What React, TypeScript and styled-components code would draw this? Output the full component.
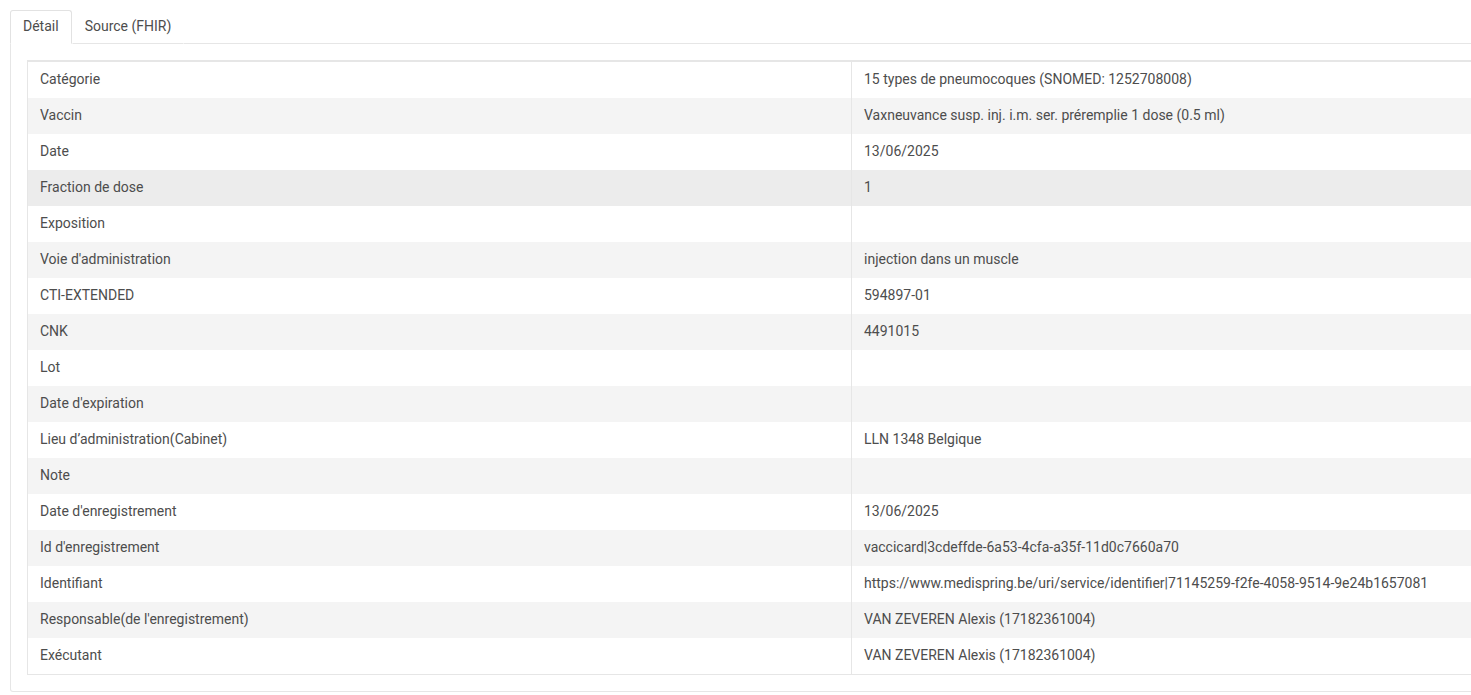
import styled, { createGlobalStyle } from 'styled-components'

const GlobalStyle = createGlobalStyle`
  html, body {
    margin: 0;
    padding: 0;
    background: #ffffff;
    overflow: hidden;
  }
  body {
    font-family: Roboto, "Liberation Sans", Arial, sans-serif;
    font-size: 14px;
    color: #4d4d4d;
  }
`

type Row = { label: string; value: string }

const rows: Row[] = [
  { label: 'Catégorie', value: '15 types de pneumocoques (SNOMED: 1252708008)' },
  { label: 'Vaccin', value: 'Vaxneuvance susp. inj. i.m. ser. préremplie 1 dose (0.5 ml)' },
  { label: 'Date', value: '13/06/2025' },
  { label: 'Fraction de dose', value: '1' },
  { label: 'Exposition', value: '' },
  { label: "Voie d'administration", value: 'injection dans un muscle' },
  { label: 'CTI-EXTENDED', value: '594897-01' },
  { label: 'CNK', value: '4491015' },
  { label: 'Lot', value: '' },
  { label: "Date d'expiration", value: '' },
  { label: 'Lieu d’administration(Cabinet)', value: 'LLN 1348 Belgique' },
  { label: 'Note', value: '' },
  { label: "Date d'enregistrement", value: '13/06/2025' },
  { label: "Id d'enregistrement", value: 'vaccicard|3cdeffde-6a53-4cfa-a35f-11d0c7660a70' },
  { label: 'Identifiant', value: 'https://www.medispring.be/uri/service/identifier|71145259-f2fe-4058-9514-9e24b1657081' },
  { label: "Responsable(de l'enregistrement)", value: 'VAN ZEVEREN Alexis (17182361004)' },
  { label: 'Exécutant', value: 'VAN ZEVEREN Alexis (17182361004)' },
]

const Page = styled.div`
  padding: 10px 0 0 10px;
  width: 1520px;
`

const TabBar = styled.div`
  display: flex;
  height: 34px;
`

const Tab = styled.div<{ $active?: boolean }>`
  height: 34px;
  box-sizing: border-box;
  display: flex;
  align-items: center;
  padding: 0 12px 2px;
  color: #4d4d4d;
  background: #fff;
  border: 1px solid ${(p) => (p.$active ? '#e2e2e2' : 'transparent')};
  border-bottom: 1px solid ${(p) => (p.$active ? '#ffffff' : '#e6e6e6')};
  border-radius: 3px 3px 0 0;
`

const TabFiller = styled.div`
  flex: 1;
  border-bottom: 1px solid #e6e6e6;
`

const Panel = styled.div`
  border: 1px solid #e6e6e6;
  border-top: none;
  border-radius: 0 0 3px 3px;
  padding: 16px;
`

const Table = styled.div`
  display: grid;
  grid-template-columns: 824px 1fr;
  border: 1px solid #e6e6e6;
  border-top: 2px solid #e6e6e6;
`

const Cell = styled.div<{ $stripe: boolean; $hover: boolean; $first?: boolean }>`
  height: 36px;
  box-sizing: border-box;
  display: flex;
  align-items: center;
  padding: 0 12px 2px;
  white-space: nowrap;
  background: ${(p) => (p.$hover ? '#ececec' : p.$stripe ? '#f4f4f4' : '#ffffff')};
  border-right: ${(p) => (p.$first ? '1px solid #e6e6e6' : 'none')};
`

export default function App() {
  return (
    <>
      <GlobalStyle />
      <Page>
        <TabBar>
          <Tab $active>Détail</Tab>
          <Tab>Source (FHIR)</Tab>
          <TabFiller />
        </TabBar>
        <Panel>
          <Table>
            {rows.map((r, i) => {
              const stripe = i % 2 === 1
              const hover = i === 3
              return [
                <Cell key={`l${i}`} $first $stripe={stripe} $hover={hover}>
                  {r.label}
                </Cell>,
                <Cell key={`v${i}`} $stripe={stripe} $hover={hover}>
                  {r.value}
                </Cell>,
              ]
            })}
          </Table>
        </Panel>
      </Page>
    </>
  )
}
